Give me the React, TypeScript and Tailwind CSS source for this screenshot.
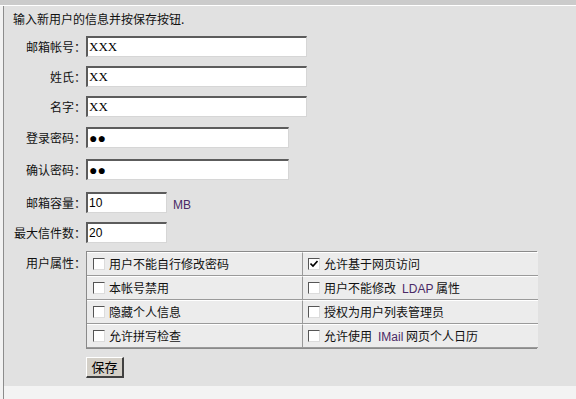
const cjk = "font-['SimSun','Noto_Sans_CJK_SC',sans-serif]";

function Field({ label, value, width, serif, password, suffix, mt }: {
  label: string;
  value: string;
  width: string;
  serif?: boolean;
  password?: boolean;
  suffix?: string;
  mt: string;
}) {
  return (
    <div className={`flex items-center h-[21px] ${mt}`}>
      <div className="w-[73px] text-right leading-[14px] whitespace-nowrap">{label}</div>
      <div
        className={`${width} h-[21px] bg-white border-t-2 border-l-2 border-b border-r border-t-[#5c5c5c] border-l-[#5c5c5c] border-b-[#d6d6d6] border-r-[#d6d6d6] flex items-center pl-[1px] ${
          serif ? "font-['Liberation_Serif',serif] text-[13px]" : "font-['Liberation_Sans',sans-serif] text-[12px]"
        } text-black`}
      >
        {password ? <span className="text-[14px] leading-[14px] tracking-[0px]">●●</span> : value}
      </div>
      {suffix && (
        <span className="ml-[6px] mt-[4px] font-['Liberation_Sans',sans-serif] text-[12px] text-[#4a2a66]">{suffix}</span>
      )}
    </div>
  );
}

function Box({ checked }: { checked?: boolean }) {
  return (
    <span className="w-[12px] h-[12px] shrink-0 bg-white border-t border-l border-b border-r border-t-[#555] border-l-[#555] border-b-[#dcdcdc] border-r-[#dcdcdc] flex items-center justify-center">
      {checked && (
        <svg width="8" height="8" viewBox="0 0 8 8">
          <path d="M0.5 3.5 L3 6 L7.5 1" stroke="#000" strokeWidth="1.6" fill="none" />
        </svg>
      )}
    </span>
  );
}

function Cell({ children, checked, right }: { children: React.ReactNode; checked?: boolean; right?: boolean }) {
  return (
    <div
      className={`h-[24px] flex items-center gap-[4px] bg-[#ececec] border-t border-t-[#ffffff] border-b border-b-[#9a9a9a] ${
        right ? "pl-[5px] border-l border-l-[#9a9a9a]" : "pl-[6px]"
      }`}
    >
      <Box checked={checked} />
      <span className="leading-[14px] whitespace-nowrap">{children}</span>
    </div>
  );
}

const purple = "font-['Liberation_Sans',sans-serif] text-[#4a2a66]";

export default function App() {
  return (
    <div className={`w-[576px] h-[399px] flex flex-col bg-[#f2f2f2] text-[12px] text-[#111] ${cjk}`}>
      <div className="h-[5px] bg-[#cbcbcb] border-b border-b-white shrink-0 box-content" />
      <div className="flex flex-1">
        <div className="w-[3px] bg-[#f2f2f2]" />
        <div className="w-[1px] bg-[#8c8c8c]" />
        <div className="flex-1 flex flex-col">
          <div className="bg-[#e1e1e1] pl-[9px] pt-[6px] pb-[8px]">
            <div className="h-[14px] leading-[14px]">输入新用户的信息并按保存按钮.</div>
            <Field label="邮箱帐号：" value="XXX" width="w-[221px]" serif mt="mt-[10px]" />
            <Field label="姓氏：" value="XX" width="w-[221px]" serif mt="mt-[9px]" />
            <Field label="名字：" value="XX" width="w-[221px]" serif mt="mt-[9px]" />
            <Field label="登录密码：" value="" password width="w-[203px]" mt="mt-[10px]" />
            <Field label="确认密码：" value="" password width="w-[203px]" mt="mt-[11px]" />
            <Field label="邮箱容量：" value="10" width="w-[81px]" suffix="MB" mt="mt-[12px]" />
            <Field label="最大信件数：" value="20" width="w-[81px]" mt="mt-[9px]" />
            <div className="flex mt-[8px]">
              <div className="w-[73px] text-right pt-[5px] leading-[14px]">用户属性：</div>
              <div className="w-[451px] grid grid-cols-[215px_236px] border-t border-l border-r border-[#8a8a8a] border-b border-b-[#8a8a8a]">
                <Cell>用户不能自行修改密码</Cell>
                <Cell right checked>允许基于网页访问</Cell>
                <Cell>本帐号禁用</Cell>
                <Cell right>
                  用户不能修改 <span className={purple}>&nbsp;LDAP</span> 属性
                </Cell>
                <Cell>隐藏个人信息</Cell>
                <Cell right>授权为用户列表管理员</Cell>
                <Cell>允许拼写检查</Cell>
                <Cell right>
                  允许使用 <span className={purple}>&nbsp;IMail</span> 网页个人日历
                </Cell>
              </div>
            </div>
            <div className="flex mt-[8px]">
              <div className="w-[73px]" />
              <button className="w-[38px] h-[21px] bg-[#d4d0c8] border-t border-l border-b-2 border-r-2 border-t-white border-l-white border-b-[#404040] border-r-[#404040] text-[13px] leading-[14px] text-black flex items-center justify-center">
                保存
              </button>
            </div>
          </div>
          <div className="flex-1 bg-[#f3f3f3]" />
        </div>
      </div>
    </div>
  );
}
